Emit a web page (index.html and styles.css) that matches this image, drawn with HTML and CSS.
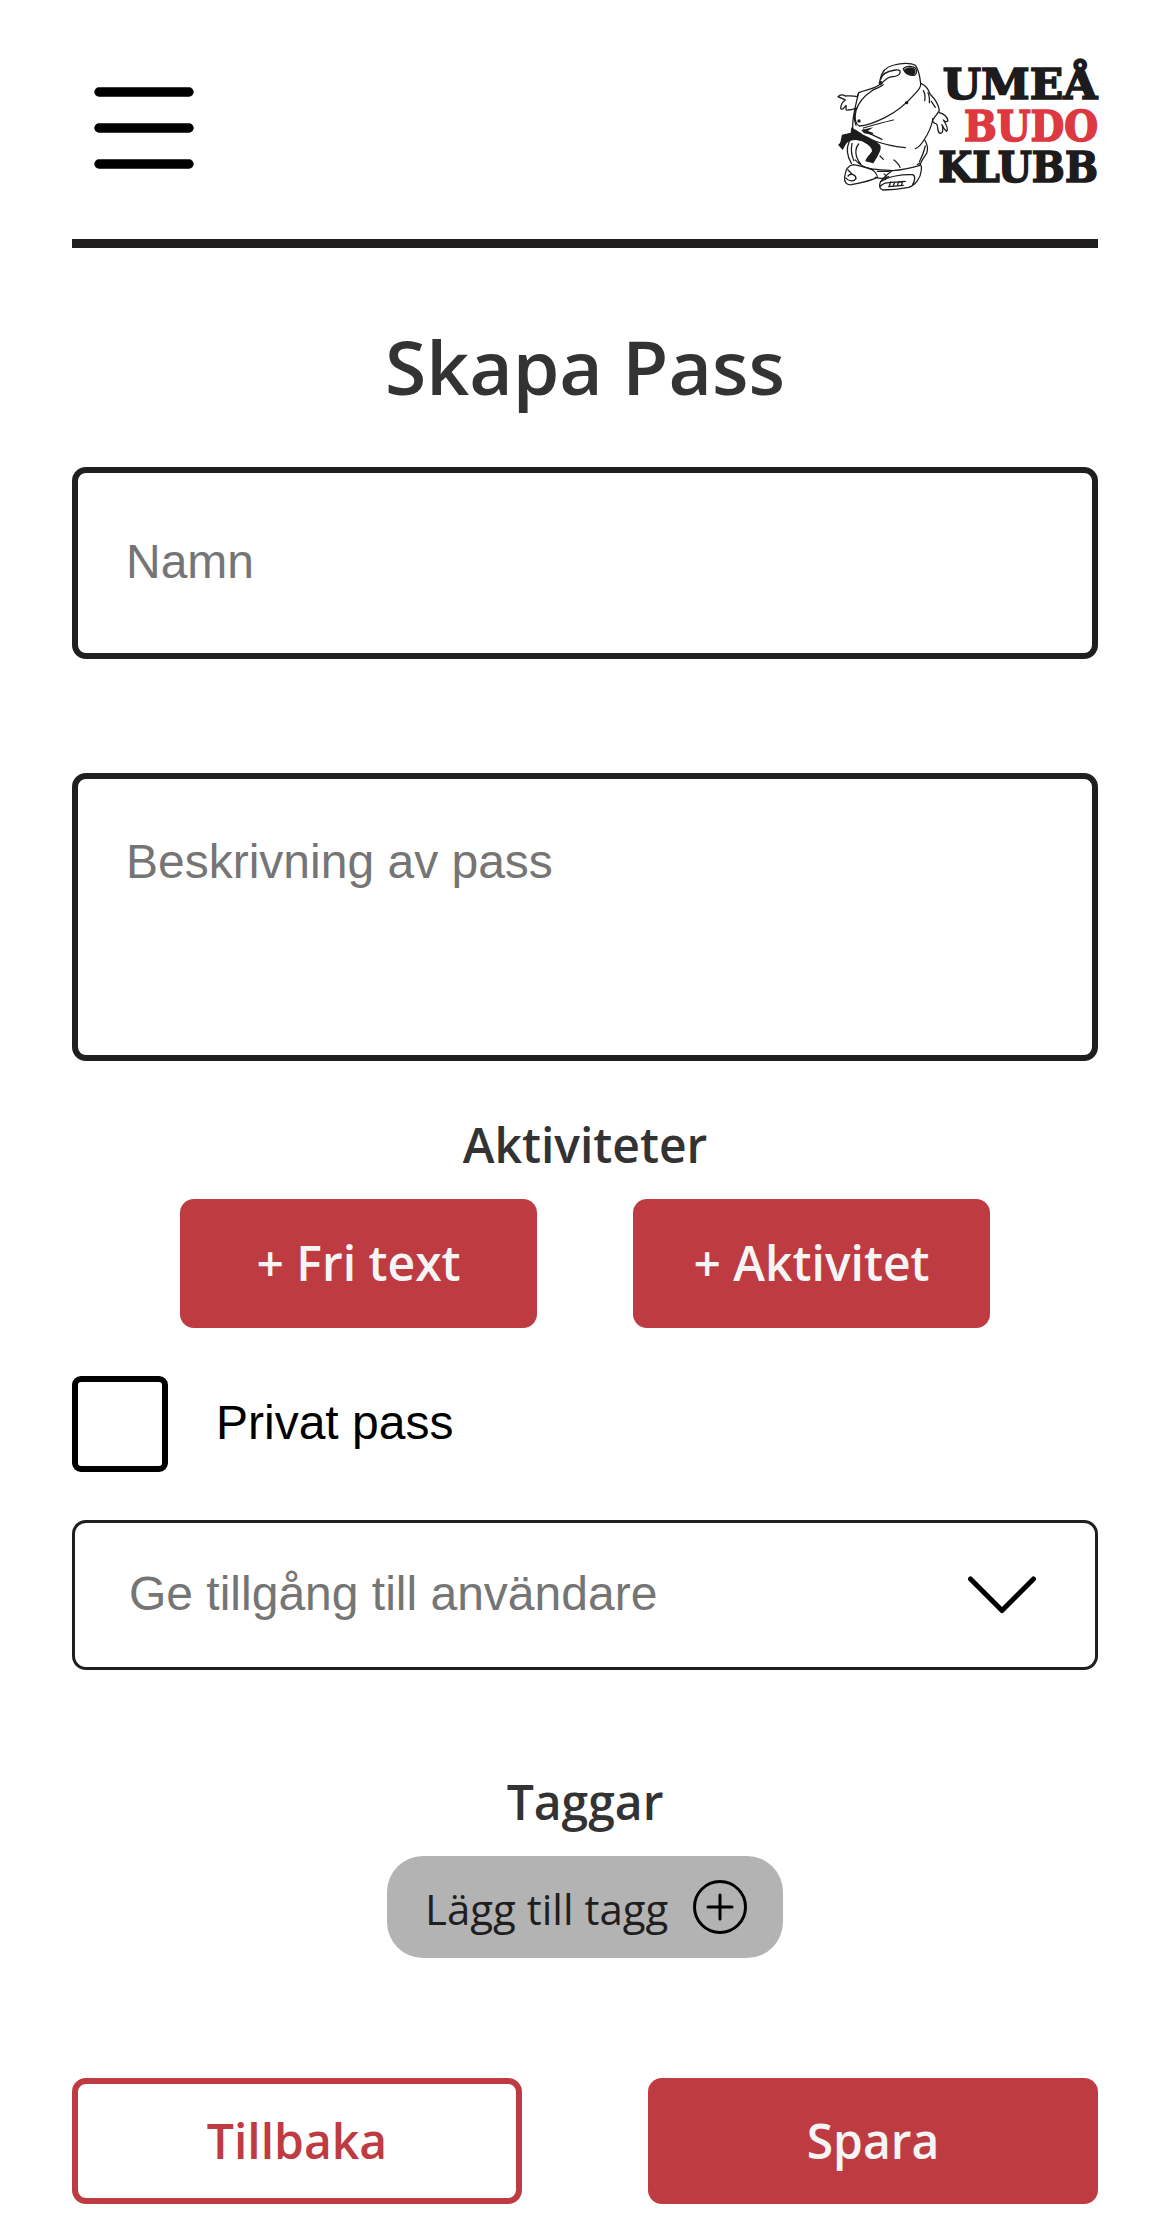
FILE: index.html
```html
<!DOCTYPE html>
<html lang="sv">
<head>
<meta charset="utf-8">
<title>Skapa Pass</title>
<link rel="stylesheet" href="styles.css">
</head>
<body>
<div class="page">
  <header class="header">
    <button class="menu" aria-label="Meny">
      <svg width="100" height="84" viewBox="0 0 100 84" fill="none" stroke="#000" stroke-width="9.4" stroke-linecap="round"><path d="M5 6H95M5 42H95M5 78H95"/></svg>
    </button>
    <svg class="logo" viewBox="48 45 786 414" role="img" aria-label="Umeå Budo Klubb">
      <g fill="none" stroke="#1d1b1c" stroke-width="3.8" stroke-linecap="round" stroke-linejoin="round">
        <path d="M180 120C184 95 198 80 222 75C244 69 272 68 286 76C296 88 300 112 302 130C304 140 298 148 286 160C262 188 232 214 196 232C164 248 138 257 118 258C104 252 104 230 108 212C114 190 132 168 156 152C170 144 182 142 190 134"/>
        <path d="M182 118C184 104 200 94 226 90C240 88 244 94 238 102C232 112 214 108 204 114C196 120 188 124 184 132C178 138 176 132 180 122"/>
        <path d="M250 86C256 78 276 76 286 84C292 92 290 102 284 106C270 108 254 102 250 86"/>
        <path d="M176 136C160 148 134 150 116 158L112 170C96 166 84 168 76 168C66 162 58 166 54 170C62 174 70 176 76 180C70 184 62 192 62 206C68 212 72 202 78 196C80 206 74 212 84 210C94 210 104 206 110 204"/>
        <path d="M116 158C110 182 104 206 102 222C98 238 98 250 98 266M108 206C100 226 104 246 108 256"/>
        <path d="M302 130C318 136 326 150 330 162C344 176 356 192 358 212C352 222 344 230 338 240C334 260 324 282 312 300C302 316 292 324 286 326"/>
        <path d="M310 152C316 162 316 172 314 182M324 158C328 170 330 178 328 188M334 184L346 202"/>
        <path d="M358 218C372 222 382 232 384 242C380 248 374 244 370 240C378 252 386 266 380 274C374 270 370 262 366 254C370 268 370 280 360 280C350 276 356 262 350 252C342 250 336 246 338 236"/>
        <path d="M130 264C164 254 194 246 220 240M130 270L158 280M156 300C188 312 222 320 256 323M130 272L186 298"/>
        <path d="M314 300C322 312 324 328 320 340C310 354 302 364 300 376C272 384 242 390 218 392C194 390 174 390 150 386"/>
        <path d="M316 318C312 336 304 354 298 366M180 348L190 358M222 360C232 368 238 376 240 382"/>
        <path d="M88 304C78 326 82 350 94 370M96 310C92 330 96 350 102 362M116 312C104 326 104 350 122 372M106 360C116 374 142 386 160 390"/>
        <path d="M100 374C84 376 76 394 74 410C72 428 80 436 94 434C126 428 158 420 172 412C172 400 158 388 146 384C132 382 118 376 100 374M84 408C92 398 108 404 108 416C102 426 84 424 78 414M84 390L96 402"/>
        <path d="M172 394H208M166 412C182 416 196 416 206 410M192 402C198 404 200 412 196 418"/>
        <path d="M216 392C202 402 190 414 182 424C176 438 178 446 188 450C216 450 246 446 266 442C286 436 302 414 304 390C306 376 300 366 292 374M184 424C204 410 246 402 278 404C288 408 284 424 278 434M182 438C190 430 200 428 206 428M212 426L208 438M224 426L220 438M236 424L232 437M248 424L244 436M206 428L256 424M206 440L250 436"/>
      </g>
      <g fill="#1d1b1c">
        <path d="M252 90C262 78 282 80 286 90C288 102 282 106 274 106C262 104 254 98 252 90Z"/>
        <path d="M94 262L112 272L130 284C148 292 164 300 180 314C186 326 178 338 172 350L160 370L136 364C140 350 150 344 156 334C156 320 140 312 126 304L108 300C94 300 84 304 78 312L68 330L54 314C64 310 62 296 66 284L92 278Z"/>
        <path d="M124 270L160 262L142 274L156 284L132 280Z"/>
        <circle cx="117" cy="243" r="5"/><circle cx="183" cy="128" r="5"/><circle cx="260" cy="188" r="5"/>
      </g>
      <g class="wordmark">
        <text x="368" y="178" textLength="464" lengthAdjust="spacingAndGlyphs">UMEÅ</text>
        <text class="red" x="432" y="302" textLength="402" lengthAdjust="spacingAndGlyphs">BUDO</text>
        <text x="355" y="427" textLength="479" lengthAdjust="spacingAndGlyphs">KLUBB</text>
      </g>
    </svg>
  </header>

  <main class="form">
    <h1 class="title">Skapa Pass</h1>
    <input class="field name" type="text" placeholder="Namn">
    <textarea class="field description" placeholder="Beskrivning av pass"></textarea>

    <h2 class="subtitle activities-title">Aktiviteter</h2>
    <div class="activities">
      <button class="button">+ Fri text</button>
      <button class="button">+ Aktivitet</button>
    </div>

    <label class="private"><input class="checkbox" type="checkbox"><span>Privat pass</span></label>

    <div class="select">
      <span>Ge tillgång till användare</span>
      <svg width="70" height="40" viewBox="0 0 70 40" fill="none" stroke="#000" stroke-width="5" stroke-linecap="round" stroke-linejoin="round"><path d="M3.500 4L35 35.500L66.500 4"/></svg>
    </div>

    <h2 class="subtitle tags-title">Taggar</h2>
    <button class="tag">
      <span>Lägg till tagg</span>
      <svg width="54" height="54" viewBox="0 0 54 54" fill="none" stroke="#000" stroke-width="3" stroke-linecap="round"><circle cx="27" cy="27" r="25.500"/><path d="M27 15V39M15 27H39"/></svg>
    </button>

    <div class="actions">
      <button class="button outline">Tillbaka</button>
      <button class="button">Spara</button>
    </div>
  </main>
</div>
</body>
</html>
```
FILE: styles.css
```css
* { box-sizing: border-box; }

html { overflow: hidden; }

body {
  margin: 0;
  background: #fff;
  font-family: "Open Sans", sans-serif;
}

button {
  border: 0;
  padding: 0;
  font-family: inherit;
}

.page {
  width: 1170px;
  height: 2234px;
  padding: 0 72px;
}

.header {
  display: flex;
  justify-content: space-between;
  align-items: flex-start;
  height: 248px;
  padding: 55px 0 0 22px;
  border-bottom: 9px solid #201e1f;
}

.menu {
  display: flex;
  margin-top: 31px;
  background: none;
}

.logo {
  width: 262px;
  height: 138px;
  overflow: visible;
}

.wordmark {
  font: bold 131px "DejaVu Serif", serif;
  fill: #1d1b1c;
  stroke: #1d1b1c;
  stroke-width: 5;
}

.wordmark .red {
  fill: #de3840;
  stroke: #de3840;
}

.form {
  display: flex;
  flex-direction: column;
}

.title {
  margin: 74px 0 0;
  height: 145px;
  line-height: 88px;
  text-align: center;
  font-size: 75px;
  font-weight: 600;
  color: #333;
}

.field {
  width: 100%;
  border: 6px solid #201e1f;
  border-radius: 14px;
  background: #fff;
  font: 48px "Liberation Sans", Arial, sans-serif;
}

.field::placeholder { color: #757575; opacity: 1; }

.name {
  height: 192px;
  padding: 0 48px 4px;
}

.description {
  height: 288px;
  margin-top: 114px;
  padding: 55px 48px;
  resize: none;
}

.subtitle {
  margin: 0;
  height: 66px;
  line-height: 66px;
  text-align: center;
  font-size: 48px;
  font-weight: 600;
  color: #333;
}

.activities-title { margin-top: 51px; }

.activities {
  display: flex;
  justify-content: center;
  gap: 96px;
  margin-top: 21px;
}

.button {
  border-radius: 14px;
  background: #be3b41;
  color: #f5f5f5;
  font-size: 48px;
  font-weight: 600;
}

.activities .button {
  width: 357px;
  height: 129px;
  padding-bottom: 3px;
}

.private {
  display: flex;
  align-items: center;
  gap: 48px;
  height: 96px;
  margin-top: 48px;
  font: 48px "Liberation Sans", Arial, sans-serif;
}

.checkbox {
  appearance: none;
  width: 96px;
  height: 96px;
  margin: 0;
  border: 6px solid #000;
  border-radius: 9px;
}

.private span { padding-bottom: 4px; }

.select {
  display: flex;
  justify-content: space-between;
  align-items: center;
  height: 150px;
  margin-top: 48px;
  padding: 0 58px 0 54px;
  border: 3px solid #201e1f;
  border-radius: 14px;
  color: #757575;
  font: 48px "Liberation Sans", Arial, sans-serif;
}

.select span { padding-bottom: 4px; }

.tags-title { margin-top: 99px; }

.tag {
  display: flex;
  align-self: center;
  align-items: center;
  justify-content: space-between;
  width: 396px;
  height: 102px;
  margin-top: 21px;
  padding: 0 36px 0 38px;
  border-radius: 36px;
  background: #b3b3b3;
  color: #201e1f;
  font-size: 42px;
}

.tag span { padding-top: 3px; }

.actions {
  display: flex;
  justify-content: space-between;
  margin-top: 120px;
}

.actions .button {
  width: 450px;
  height: 126px;
  padding-bottom: 1px;
}

.actions .outline {
  border: 6px solid #be3b41;
  background: #fff;
  color: #be3b41;
}
```
